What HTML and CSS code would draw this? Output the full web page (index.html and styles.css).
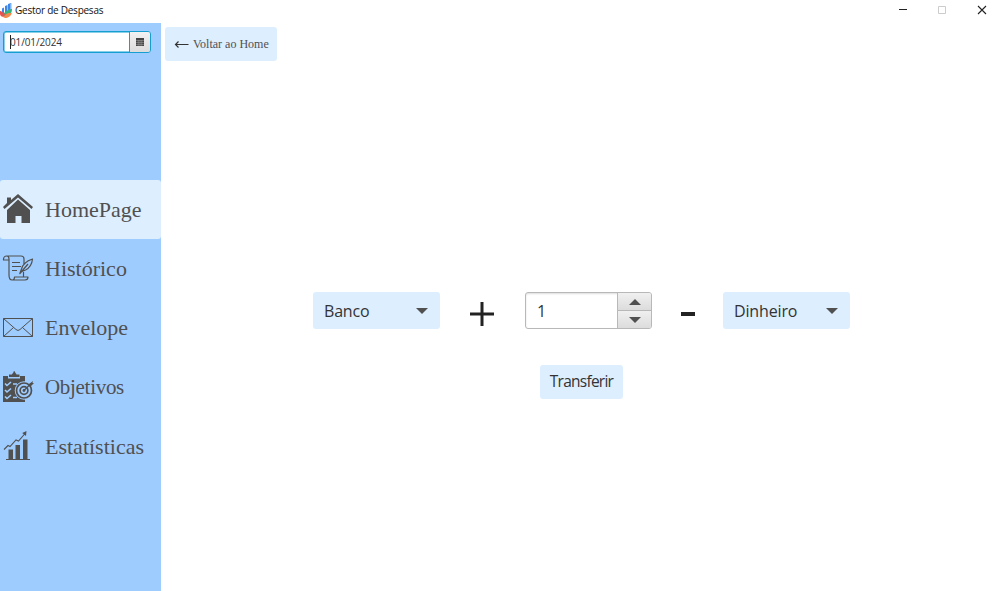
FILE: index.html
```html
<!DOCTYPE html>
<html lang="pt">
<head>
<meta charset="utf-8">
<title>Gestor de Despesas</title>
<link rel="stylesheet" href="styles.css">
</head>
<body>
<header class="titlebar">
  <svg class="app-icon" width="13" height="16" viewBox="0 0 13 16">
    <path d="M2 6.500l2-1V12H2zM5 4l2.500-1v8H5zM8 2l3-1v9H8z" fill="#3f86ea"/>
    <path d="M10 1.500l1.500-.5v9H10z" fill="#7bb5f7"/>
    <path d="M2 12c3-1 4-3 6-4s3-1 4-1c0 3-2 6-5 7s-4 0-5-2z" fill="#36b37e"/>
    <path d="M0 9c2 0 3 2 5 3l-1 3c-2 0-4-1-4-3z" fill="#e8524f"/>
    <path d="M2 14.500c3 0 3-2 5-3s3 0 5-1c-1 4-4 5.500-7 5.500z" fill="#f28a4e"/>
  </svg>
  <span class="app-title">Gestor de Despesas</span>
  <div class="window-buttons">
    <svg width="10" height="10" viewBox="0 0 10 10"><path d="M1 4.500h8" stroke="#222"/></svg>
    <svg width="10" height="10" viewBox="0 0 10 10"><path d="M1.500 1.500h7v7h-7z" fill="none" stroke="#ccc"/></svg>
    <svg width="10" height="10" viewBox="0 0 10 10"><path d="M1 1l8 8M9 1l-8 8" stroke="#222" stroke-width="1.1"/></svg>
  </div>
</header>
<div class="app">
  <aside class="sidebar">
    <div class="date-picker">
      <div class="date-value"><span class="caret"></span><span class="date-text">01/01/2024</span></div>
      <div class="date-button">
        <svg width="8" height="8" viewBox="0 0 8 8"><path d="M0 0h8v8H0z" fill="#444"/><path d="M0 2.500h8M0 4.500h8M0 6.500h8M2.200 2v6M4 2v6M5.800 2v6" stroke="#aaa" stroke-width=".45"/></svg>
      </div>
    </div>
    <nav class="menu">
      <a class="item active">
        <svg class="icon" width="32" height="34" viewBox="0 0 32 34">
          <path d="M5 11V5.500h4V8L16 2l15 13-1.500 2L16 5.500 2.500 17 1 15z" fill="#505050"/>
          <path d="M16 7.500L28 18v13h-8.500v-7h-6v7H5V18z" fill="#505050"/>
        </svg><span class="label">HomePage</span></a>
      <a class="item">
        <svg class="icon" width="32" height="34" viewBox="0 0 32 34" fill="none" stroke="#505050" stroke-width="1.200" stroke-linejoin="round">
          <path d="M7 24V8c0-2-1-3-2.500-3S1.500 6.300 1.500 8v1H7M4.500 5H19c2 0 3 1.500 3 3v5M7 24c0 3 1 5 3 5h13c2 0 3-1 3-3H12.500c0 2-.5 3-2 3M21.500 21v5"/>
          <path d="M10 11.500h8M10 15.500h9M10 19.500h5M18 22l1.500-4c1-4 5-8 11-10-.5 5-3 9-7 11l-3.500 1.500zM17.500 23l8.500-10"/>
        </svg><span class="label">Histórico</span></a>
      <a class="item">
        <svg class="icon" width="32" height="34" viewBox="0 0 32 34" fill="none" stroke="#505050" stroke-width="1">
          <path d="M1.500 7.500h29v18h-29zM1.500 7.500l12.500 11q2 2 4 0l12.500-11M1.500 25.500l10-9M30.500 25.500l-10-9"/>
        </svg><span class="label">Envelope</span></a>
      <a class="item">
        <svg class="icon" width="32" height="34" viewBox="0 0 32 34">
          <path d="M7 7V4.500h3c0-1 1-1 1.500-2.500q.5-2 1.500 0c.5 1.500 1.500 1.500 1.500 2.500h3V7z" fill="#505050"/>
          <path d="M1 6h5v2.500h12V6h5v26H1z" fill="#505050"/>
          <path d="M3 13.500l2 2 4-3.500M3 20l2 2 4-3.500M3 26.500l2 2 4-3.500M11 14h4M11 27.500h4" fill="none" stroke="#9fccff" stroke-width="1.600"/>
          <circle cx="22" cy="20.500" r="9.300" fill="#9fccff"/>
          <g fill="none" stroke="#505050" stroke-width="1.700"><circle cx="22" cy="20.500" r="7.500"/><circle cx="22" cy="20.500" r="3.900"/></g>
          <circle cx="22" cy="20.500" r="1.400" fill="#505050"/>
          <path d="M22 20.500l7-7" stroke="#505050" stroke-width="1.300"/>
          <path d="M27 14l4-3-.5 2h1.500l-3 3h-2z" fill="#505050"/>
        </svg><span class="label obj">Objetivos</span></a>
      <a class="item">
        <svg class="icon" width="32" height="34" viewBox="0 0 32 34">
          <path d="M6.500 20.500h4.500v9.500H6.500zM13.500 16H18v14h-4.500zM21 10.500h4.500V30H21zM4 30h24v1H4z" fill="#505050"/>
          <path d="M2 20.500l4-4 2 1L14 11l2.500 1L23.500 4" fill="none" stroke="#505050" stroke-width="1.100"/>
          <path d="M24.500 2l-.5 5-3.800-3z" fill="#505050"/>
        </svg><span class="label">Estatísticas</span></a>
    </nav>
  </aside>
  <main class="content">
    <button class="back">
      <svg width="15" height="9" viewBox="0 0 15 9"><path d="M1 4.500h13.500M4.500 1.500l-3 3 3 3" fill="none" stroke="#333" stroke-width="1.200"/></svg>
      <span class="back-text">Voltar ao Home</span>
    </button>
    <section class="transfer">
      <div class="row">
        <div class="combo"><span class="banco">Banco</span><span class="down"></span></div>
        <svg class="plus" width="24" height="24" viewBox="0 0 24 24"><path d="M0 12h24M12 0v24" stroke="#222" stroke-width="3"/></svg>
        <div class="spinner">
          <div class="number">1</div>
          <div class="steps"><div class="step"><span class="up"></span></div><div class="step"><span class="down"></span></div></div>
        </div>
        <svg class="minus" width="14" height="4" viewBox="0 0 14 4"><path d="M0 0h14v4H0z" fill="#222"/></svg>
        <div class="combo"><span class="dinheiro">Dinheiro</span><span class="down"></span></div>
      </div>
      <button class="submit"><span class="submit-text">Transferir</span></button>
    </section>
  </main>
</div>
</body>
</html>
```
FILE: styles.css
```css
* { box-sizing: border-box; }
body { margin: 0; width: 1000px; height: 591px; overflow: hidden; background: #fff; font-family: "Open Sans", "Noto Sans", sans-serif; color: #333; }
button { border: 0; margin: 0; color: inherit; font: inherit; }
svg { display: block; flex: none; }
span { white-space: nowrap; }
.titlebar { height: 23px; display: flex; align-items: flex-start; }
.app-icon { margin-top: 2px; }
.app-title { margin: 3px 0 0 2px; font-size: 10px; line-height: 15px; color: #111; letter-spacing: -.25px; }
.window-buttons { display: flex; gap: 30px; margin: 5px 13px 0 auto; }
.window-buttons svg:first-child { margin-right: -1px; }
.app { display: flex; height: 568px; }
.sidebar { width: 161px; background: #9fccff; padding-top: 8px; }
.date-picker { display: flex; width: 148px; height: 22px; margin-left: 3px; border: 1px solid #159fd0; border-radius: 3px; background: #fff; box-shadow: inset 0 0 0 .5px #159fd0; }
.date-value { flex: 1; display: flex; align-items: center; padding: 0 0 0 6px; font-size: 10px; }
.caret { width: 1px; height: 14px; margin-right: -1px; background: #222; }
.date-text { letter-spacing: -.12px; }
.date-button { width: 21px; border-left: 1px solid #159fd0; background: linear-gradient(#f2f2f2, #dcdcdc); border-radius: 0 2px 2px 0; display: flex; align-items: center; justify-content: center; }
.menu { margin-top: 126.600px; display: flex; flex-direction: column; }
.item { height: 59.250px; display: flex; align-items: center; gap: 12px; padding-left: 2px; border-radius: 3px; }
.active { background: #ddeeff; }
.label { margin-left: -1px; padding-top: 1px; font: 22px "Liberation Serif", serif; color: #505050; }
.obj { font-size: 21px; letter-spacing: -.3px; }
.content { flex: 1; padding: 4px 0 0 4px; }
.back { display: flex; align-items: center; gap: 4px; width: 112px; height: 34px; padding: 0 0 0 9px; background: #ddeeff; border-radius: 3px; }
.back-text { font: 12px "Liberation Serif", serif; color: #505050; }
.transfer { margin: 231.400px 0 0 148px; width: 537px; }
.row { display: flex; align-items: center; height: 37px; }
.combo { width: 126.500px; height: 37px; display: flex; align-items: center; justify-content: space-between; background: #ddeeff; border-radius: 3px; padding: 0 11.500px 0 11px; font-size: 16px; }
.down, .up { width: 0; height: 0; border: 6px solid transparent; border-bottom-width: 0; border-top-color: #505050; }
.up { border-width: 0 6px 6px; border-bottom-color: #505050; }
.plus { margin: 6px 31px 0 30.500px; }
.spinner { display: flex; width: 127px; height: 37px; border: 1px solid #b8b8b8; border-radius: 3px; overflow: hidden; box-shadow: inset 0 1px 2px #ddd; }
.number { flex: 1; padding-left: 11px; line-height: 36px; font-size: 16px; }
.steps { width: 34px; border-left: 1px solid #b8b8b8; display: flex; flex-direction: column; }
.step { flex: 1; display: flex; align-items: center; justify-content: center; background: linear-gradient(#f0f0f0, #dcdcdc); }
.step + .step { border-top: 1px solid #b8b8b8; }
.minus { margin: 6px 28px 0 29px; }
.submit { display: flex; align-items: center; justify-content: center; width: 83px; height: 34px; margin: 35.300px 0 0 227px; padding: 0 0 1px; background: #ddeeff; border-radius: 3px; font-size: 15.500px; }
.banco { letter-spacing: -.2px; }
.dinheiro { letter-spacing: -.15px; }
.submit-text { letter-spacing: -.75px; }
```
